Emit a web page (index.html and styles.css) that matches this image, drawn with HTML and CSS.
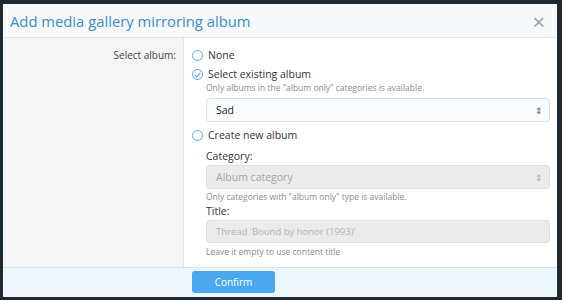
FILE: index.html
```html
<!DOCTYPE html>
<html lang="en">
<head>
    <meta charset="UTF-8">
    <meta name="viewport" content="width=device-width, initial-scale=1.0">
    <title>Add media gallery mirroring album</title>
    <link rel="stylesheet" href="styles.css">
</head>
<body>

    <div class="overlay">
        <div class="dialog">
            <div class="dialogHeader">
                <div class="dialogTitle">Add media gallery mirroring album</div>
                <div class="closeBtn">&times;</div>
            </div>

            <div class="dialogBody">
                <div class="labelCol">
                    <div class="rowLabel">Select album:</div>
                </div>
                <div class="inputCol">
                    <label class="radio">
                        <span class="radioMark"></span>
                        <span>None</span>
                    </label>
                    <label class="radio">
                        <span class="radioMark checked">
                            <svg width="7" height="6" viewBox="0 0 7 6"><path d="M0.8 3.1 L2.7 4.8 L6.2 1" fill="none" stroke="#5aa7dc" stroke-width="1.2"/></svg>
                        </span>
                        <span>Select existing album</span>
                    </label>
                    <div class="sub">
                        <div class="hint first">Only albums in the "album only" categories is available.</div>
                        <div class="select">
                            <span>Sad</span>
                            <span class="arrows">&#8661;</span>
                        </div>
                    </div>
                    <label class="radio spaced">
                        <span class="radioMark"></span>
                        <span>Create new album</span>
                    </label>
                    <div class="sub">
                        <div class="fieldLabel">Category:</div>
                        <div class="select disabled">
                            <span>Album category</span>
                            <span class="arrows">&#8661;</span>
                        </div>
                        <div class="hint">Only categories with "album only" type is available.</div>
                        <div class="fieldLabel small">Title:</div>
                        <div class="input disabled">Thread 'Bound by honor (1993)'</div>
                        <div class="hint last">Leave it empty to use content title</div>
                    </div>
                </div>
            </div>

            <div class="dialogFooter">
                <div class="confirmBtn">Confirm</div>
            </div>
        </div>
    </div>

</body>
</html>
```

FILE: styles.css
```css
body{
    margin: 0;
    background-color: #1d2a33;
    font-family: "Open Sans", "Noto Sans", sans-serif;
}

.overlay{
    height: 300px;
    padding: 4px 5px 0 3px;
    box-sizing: border-box;
}

.dialog{
    width: 554px;
    height: 293px;
    background-color: white;
    display: flex;
    flex-direction: column;
    overflow: hidden;
}

.dialogHeader{
    height: 32px;
    background-color: #f6f9fc;
    border-bottom: 1px solid #dde4ea;
    display: flex;
    align-items: center;
    justify-content: space-between;
    padding: 1px 12px 0 7px;
    box-sizing: content-box;
}

.dialogTitle{
    font-size: 14.8px;
    color: #3b8cc4;
}

.closeBtn{
    font-size: 22px;
    color: #8aa3b7;
    line-height: 20px;
}

.dialogBody{
    height: 229px;
    display: flex;
}

.labelCol{
    width: 181px;
    background-color: #f5f5f5;
    border-right: 1px solid #e3e3e3;
    padding-top: 8px;
    padding-right: 7px;
    box-sizing: border-box;
    text-align: right;
}

.rowLabel{
    font-size: 10px;
    line-height: 19px;
    color: #444;
}

.inputCol{
    flex: 1;
    padding: 8px 7px 0 8px;
}

.radio{
    display: flex;
    align-items: center;
    gap: 4px;
    font-size: 10.5px;
    line-height: 19px;
    color: #333;
}

.radio.spaced{
    margin-top: 4px;
}

.radioMark{
    width: 9px;
    height: 9px;
    border: 1px solid #5aa7dc;
    border-radius: 50%;
    background: white;
    display: flex;
    align-items: center;
    justify-content: center;
    margin-right: 1px;
}

.sub{
    padding-left: 14px;
}

.hint{
    font-size: 8.5px;
    line-height: 12px;
    color: #8c8c8c;
    margin-top: 2px;
}

.hint.first{
    margin-top: -2px;
}

.hint.last{
    margin-top: 3px;
}

.select,
.input{
    height: 24px;
    box-sizing: border-box;
    border: 1px solid #dcdfe3;
    border-radius: 4px;
    background-color: #f9fcff;
    font-size: 10.5px;
    color: #222;
    padding: 0 6px 0 9px;
    display: flex;
    align-items: center;
    justify-content: space-between;
}

.select{
    margin-top: 4px;
}

.fieldLabel + .select{
    margin-top: 0;
}

.arrows{
    font-size: 9px;
    color: #555;
}

.disabled{
    background-color: #ebebeb;
    color: #a6a6a6;
}

.disabled .arrows{
    color: #aaa;
}

.input{
    margin-top: 1px;
    height: 23px;
    font-size: 9.5px;
    color: #b3b3b3;
}

.fieldLabel{
    font-size: 10.5px;
    line-height: 18px;
    color: #333;
    margin-top: 2px;
}

.fieldLabel.small{
    line-height: 16px;
    margin-top: 0;
}

.dialogFooter{
    flex: 1;
    background-color: #eef6fd;
    border-top: 1px solid #d8e2ea;
    padding: 3px 0 0 189px;
}

.confirmBtn{
    width: 83px;
    height: 22px;
    background-color: #4aa9ee;
    color: white;
    font-size: 10px;
    text-align: center;
    line-height: 22px;
    border-radius: 3px;
}
```
